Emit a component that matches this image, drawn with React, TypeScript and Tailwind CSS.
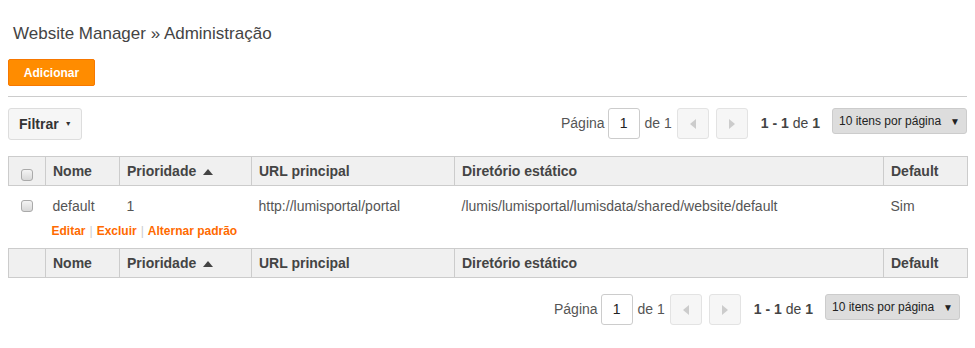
import React from "react";

const font = { fontFamily: '"Liberation Sans", Arial, sans-serif' };

const Checkbox = () => (
  <span className="inline-block h-[12px] w-[12px] rounded-[3px] border border-[#aaa] bg-gradient-to-b from-[#f4f4f4] to-[#d8d8d8]" />
);

const SortUp = () => (
  <svg width="10" height="6" viewBox="0 0 10 6" className="ml-[7px] inline-block align-middle">
    <path d="M0 6 L5 0 L10 6 Z" fill="#444" />
  </svg>
);

const Arrow = ({ dir }: { dir: "left" | "right" }) => (
  <svg width="6" height="10" viewBox="0 0 6 10">
    {dir === "left" ? <path d="M6 0 L0 5 L6 10 Z" fill="#ccc" /> : <path d="M0 0 L6 5 L0 10 Z" fill="#ccc" />}
  </svg>
);

const Pager = ({ className }: { className?: string }) => (
  <div className={`flex items-center text-[14px] text-[#555] ${className ?? ""}`}>
    <span>Página</span>
    <span className="ml-[3px] flex h-[31px] w-[32px] items-center justify-center rounded-[3px] border border-[#ccc] text-[#222]">1</span>
    <span className="ml-[5px]">de 1</span>
    <span className="ml-[5px] flex h-[31px] w-[32px] items-center justify-center rounded-[3px] border border-[#e3e3e3] bg-[#f6f6f6]">
      <Arrow dir="left" />
    </span>
    <span className="ml-[7px] flex h-[31px] w-[32px] items-center justify-center rounded-[3px] border border-[#e3e3e3] bg-[#f6f6f6]">
      <Arrow dir="right" />
    </span>
    <span className="ml-[13px] text-[#444]">
      <b>1 - 1</b> de <b>1</b>
    </span>
    <span className="ml-[12px] flex h-[26px] w-[135px] items-center justify-between self-start rounded-[3px] border border-[#ccc] bg-[#ddd] pl-[6px] pr-[6px] text-[12px] text-[#222]">
      <span>10 itens por página</span>
      <span className="text-[10px]">▼</span>
    </span>
  </div>
);

const th = "border border-[#ccc] px-[7px] text-left text-[14px] font-bold leading-[18px] text-[#444]";

const HeaderRow = ({ check }: { check?: boolean }) => (
  <tr className="h-[29px] bg-[#f0f0f0]">
    <th className="border border-[#ccc] text-center leading-[12px]">
      {check && (
        <span className="relative top-[4px]">
          <Checkbox />
        </span>
      )}
    </th>
    <th className={th}>Nome</th>
    <th className={th}>
      Prioridade
      <SortUp />
    </th>
    <th className={th}>URL principal</th>
    <th className={th}>Diretório estático</th>
    <th className={th}>Default</th>
  </tr>
);

const td = "px-[7px] pt-[11px] pb-[4px] leading-[18px]";

export default function App() {
  return (
    <div className="min-h-[348px] w-[975px] bg-white" style={font}>
      <div className="px-[8px]">
        <h1 className="pl-[5px] pt-[24px] text-[17px] font-normal leading-[20px] text-[#444]">
          Website Manager » Administração
        </h1>
        <button className="mt-[15px] h-[27px] w-[87px] rounded-[2px] border border-[#f77800] bg-[#ff8c00] text-[12px] font-bold text-white">
          Adicionar
        </button>
        <div className="mt-[10px] border-t border-[#ccc]" />
        <div className="mt-[11px] flex items-start justify-between">
          <button className="flex h-[32px] items-center rounded-[3px] border border-[#ddd] bg-[#f6f6f6] pl-[10px] pr-[9px] text-[14px] font-bold text-[#333]">
            Filtrar
            <span className="ml-[6px] text-[7px]">▼</span>
          </button>
          <Pager />
        </div>
        <table className="mt-[16px] w-[959px] table-fixed border-collapse">
          <colgroup>
            <col className="w-[37px]" />
            <col className="w-[74px]" />
            <col className="w-[132px]" />
            <col className="w-[203px]" />
            <col className="w-[429px]" />
            <col className="w-[84px]" />
          </colgroup>
          <thead>
            <HeaderRow check />
          </thead>
          <tbody className="text-[14px] text-[#555]">
            <tr>
              <td className="pt-[11px] pb-[4px] text-center align-top leading-[18px]">
                <span className="relative top-[1px]">
                  <Checkbox />
                </span>
              </td>
              <td className={td}>default</td>
              <td className={td}>1</td>
              <td className={td}>http://lumisportal/portal</td>
              <td className={td}>/lumis/lumisportal/lumisdata/shared/website/default</td>
              <td className={td}>Sim</td>
            </tr>
            <tr>
              <td />
              <td colSpan={5} className="px-[6px] pt-[4px] pb-[9px] text-[12px] font-bold leading-[16px] text-[#ff6a00]">
                <span>Editar</span>
                <span className="mx-[4px] font-normal text-[#ccc]">|</span>
                <span>Excluir</span>
                <span className="mx-[4px] font-normal text-[#ccc]">|</span>
                <span>Alternar padrão</span>
              </td>
            </tr>
          </tbody>
          <tfoot>
            <HeaderRow />
          </tfoot>
        </table>
        <div className="mt-[16px] flex justify-end pr-[7px]">
          <Pager />
        </div>
      </div>
    </div>
  );
}
